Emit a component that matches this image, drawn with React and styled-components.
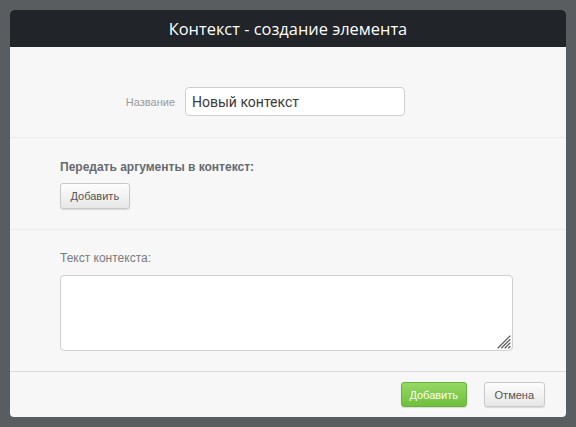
import React from "react";
import styled, { createGlobalStyle } from "styled-components";

const Global = createGlobalStyle`
  html, body { margin: 0; padding: 0; background: #595d60; }
  body { font-family: "Liberation Sans", Arial, sans-serif; }
  * { box-sizing: border-box; }
`;

const Page = styled.div`
  padding: 10px;
  min-height: 427px;
`;

const Dialog = styled.div`
  width: 556px;
  height: 407px;
  background: #f7f7f7;
  border-radius: 4px;
  overflow: hidden;
  display: flex;
  flex-direction: column;
`;

const Header = styled.div`
  height: 37px;
  background: #212428;
  color: #fff;
  font-family: "Open Sans", sans-serif;
  font-size: 16.4px;
  display: flex;
  align-items: center;
  justify-content: center;
  padding-bottom: 1px;
`;

const Section = styled.div`
  border-bottom: 1px solid ${(p) => p.$line || "#ebebeb"};
  padding: ${(p) => p.$pad};
  height: ${(p) => p.$h}px;
`;

const FieldRow = styled.div`
  display: grid;
  grid-template-columns: 165px 220px;
  column-gap: 10px;
  align-items: center;
`;

const SideLabel = styled.label`
  text-align: right;
  font-size: 11px;
  color: #9a9a9a;
`;

const TextInput = styled.input`
  height: 29px;
  width: 220px;
  border: 1px solid #cfcfcf;
  border-radius: 4px;
  background: #fff;
  padding: 0 6px;
  font-family: Roboto, sans-serif;
  font-size: 14px;
  color: #3a3a3a;
  outline: none;
`;

const BoldLabel = styled.div`
  font-size: 12px;
  line-height: 14px;
  font-weight: bold;
  color: #666a70;
  margin-bottom: 9px;
`;

const PlainLabel = styled.div`
  font-size: 12px;
  line-height: 14px;
  color: #777a7e;
  margin-bottom: 10px;
`;

const Button = styled.button`
  display: block;
  height: ${(p) => p.$h || 26}px;
  padding: 0 ${(p) => p.$px || 10}px;
  font-family: "Liberation Sans", Arial, sans-serif;
  font-size: 11px;
  border-radius: 3px;
  cursor: pointer;
  color: ${(p) => (p.$primary ? "#fff" : "#555")};
  border: 1px solid ${(p) => (p.$primary ? "#66b23a" : "#c9c9c9")};
  background: ${(p) =>
    p.$primary
      ? "linear-gradient(#95d964, #6fbf3c)"
      : "linear-gradient(#fdfdfd, #e7e7e7)"};
  box-shadow: 0 1px 1px rgba(0, 0, 0, 0.12);
`;

const AreaWrap = styled.div`
  position: relative;
  width: 453px;
  height: 76px;
`;

const TextArea = styled.textarea`
  display: block;
  width: 100%;
  height: 100%;
  border: 1px solid #cfcfcf;
  border-radius: 4px;
  background: #fff;
  outline: none;
  resize: none;
`;

const Grip = styled.svg`
  position: absolute;
  right: 2px;
  bottom: 2px;
  pointer-events: none;
`;

const Footer = styled.div`
  flex: 1;
  display: flex;
  justify-content: flex-end;
  align-items: flex-start;
  gap: 17px;
  padding: 10px 21px 0 0;
`;

export default function App() {
  return (
    <>
      <Global />
      <Page>
        <Dialog>
          <Header>Контекст - создание элемента</Header>
          <Section $h={91} $pad="40px 0 0 0">
            <FieldRow>
              <SideLabel>Название</SideLabel>
              <TextInput defaultValue="Новый контекст" />
            </FieldRow>
          </Section>
          <Section $h={92} $pad="22px 50px 0 50px">
            <BoldLabel>Передать аргументы в контекст:</BoldLabel>
            <Button $px={9.5}>Добавить</Button>
          </Section>
          <Section $h={142} $pad="21px 50px 0 50px" $line="#d8d8d8">
            <PlainLabel>Текст контекста:</PlainLabel>
            <AreaWrap>
              <TextArea />
              <Grip width="14" height="14" viewBox="0 0 14 14">
                <g stroke="#555" strokeWidth="1.1" strokeLinecap="round">
                  <line x1="13" y1="1" x2="1" y2="13" />
                  <line x1="13" y1="4.5" x2="4.5" y2="13" />
                  <line x1="13" y1="8" x2="8" y2="13" />
                  <line x1="13" y1="11.5" x2="11.5" y2="13" />
                </g>
              </Grip>
            </AreaWrap>
          </Section>
          <Footer>
            <Button $primary $px={7.5} $h={25}>Добавить</Button>
            <Button $px={10} $h={25}>Отмена</Button>
          </Footer>
        </Dialog>
      </Page>
    </>
  );
}
